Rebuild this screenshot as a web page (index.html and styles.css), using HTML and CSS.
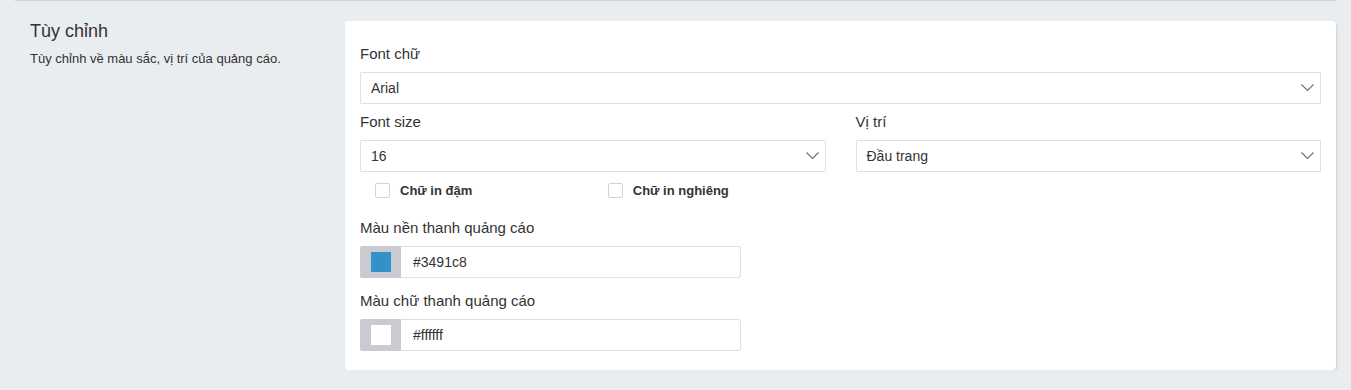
FILE: index.html
```html
<!DOCTYPE html>
<html lang="vi">
<head>
    <meta charset="UTF-8">
    <title>Tùy chỉnh quảng cáo</title>
    <link rel="stylesheet" href="styles.css">
</head>
<body>
<div class="page">
    <div class="section">
        <div class="section-info">
            <h3>Tùy chỉnh</h3>
            <p>Tùy chỉnh về màu sắc, vị trí của quảng cáo.</p>
        </div>

        <div class="card">
            <div class="form-group">
                <label>Font chữ</label>
                <div class="select-box">
                    <span>Arial</span>
                    <svg width="13" height="8" viewBox="0 0 13 8"><polyline points="0.5,0.5 6.5,6.5 12.5,0.5" fill="none" stroke="#6f6f6f" stroke-width="1.1"/></svg>
                </div>
            </div>

            <div class="form-row">
                <div class="form-group">
                    <label>Font size</label>
                    <div class="select-box">
                        <span>16</span>
                        <svg width="13" height="8" viewBox="0 0 13 8"><polyline points="0.5,0.5 6.5,6.5 12.5,0.5" fill="none" stroke="#6f6f6f" stroke-width="1.1"/></svg>
                    </div>
                    <div class="check-row">
                        <label class="check"><input type="checkbox"> Chữ in đậm</label>
                        <label class="check"><input type="checkbox"> Chữ in nghiêng</label>
                    </div>
                </div>
                <div class="form-group">
                    <label>Vị trí</label>
                    <div class="select-box">
                        <span>Đầu trang</span>
                        <svg width="13" height="8" viewBox="0 0 13 8"><polyline points="0.5,0.5 6.5,6.5 12.5,0.5" fill="none" stroke="#6f6f6f" stroke-width="1.1"/></svg>
                    </div>
                </div>
            </div>

            <div class="form-group color-group">
                <label>Màu nền thanh quảng cáo</label>
                <div class="color-input">
                    <span class="addon"><span class="swatch swatch-blue"></span></span>
                    <input type="text" value="#3491c8">
                </div>
            </div>

            <div class="form-group color-group">
                <label>Màu chữ thanh quảng cáo</label>
                <div class="color-input">
                    <span class="addon"><span class="swatch swatch-white"></span></span>
                    <input type="text" value="#ffffff">
                </div>
            </div>
        </div>
    </div>
</div>
</body>
</html>
```

FILE: styles.css
```css
body {
    margin: 0;
    background-color: #e9edf0;
    font-family: 'Liberation Sans', Arial, sans-serif;
    color: #333;
}

.page {
    margin: 0 15px;
    border-top: 1px solid #c9d5e0;
}

.section {
    display: grid;
    grid-template-columns: 330px 1fr;
    padding-top: 20px;
}

.section-info {
    padding-left: 15px;
}

.section-info h3 {
    margin: 0;
    font-size: 18px;
    font-weight: normal;
    line-height: 20px;
    color: #333;
}

.section-info p {
    margin: 9px 0 0;
    font-size: 13px;
    line-height: 17px;
    color: #333;
}

.card {
    background-color: #fff;
    border-radius: 4px;
    box-shadow: 1px 1px 2px rgba(0, 0, 0, 0.12);
    padding: 23px 15px 19px;
}

.form-group > label {
    display: block;
    font-size: 15px;
    line-height: 20px;
    margin-bottom: 8px;
}

.form-group {
    margin-bottom: 8px;
}

.form-row {
    display: grid;
    grid-template-columns: 1fr 1fr;
    gap: 30px;
}

.select-box {
    display: flex;
    align-items: center;
    justify-content: space-between;
    height: 30px;
    border: 1px solid #e0e0e0;
    border-radius: 1px;
    padding: 0 6px 0 10px;
    font-size: 14px;
}

.select-box svg {
    display: block;
}

.check-row {
    display: grid;
    grid-template-columns: 1fr 1fr;
    margin: 9px 0 0;
    height: 18px;
}

.check {
    display: flex;
    align-items: center;
    gap: 10px;
    padding-left: 15px;
    font-size: 13px;
    font-weight: bold;
    color: #333;
}

.check input {
    appearance: none;
    -webkit-appearance: none;
    margin: 0;
    width: 15px;
    height: 15px;
    border: 1px solid #d3d3d3;
    border-radius: 2px;
    background: #fff;
}

.color-group {
    margin-top: 11px;
    margin-bottom: 0;
}

.color-group + .color-group {
    margin-top: 13px;
}

.color-input {
    display: flex;
    width: 381px;
    height: 32px;
}

.addon {
    display: flex;
    align-items: center;
    justify-content: center;
    width: 41px;
    background-color: #c9cbd0;
    border-radius: 2px 0 0 2px;
}

.swatch {
    width: 20px;
    height: 20px;
}

.swatch-blue {
    background-color: #3491c8;
}

.swatch-white {
    background-color: #fff;
}

.color-input input {
    flex: 1;
    min-width: 0;
    margin: 0;
    border: 1px solid #e0e0e0;
    border-left: none;
    border-radius: 0 3px 3px 0;
    padding: 0 12px;
    font-family: 'Liberation Sans', Arial, sans-serif;
    font-size: 14px;
    color: #333;
    outline: none;
}
```
